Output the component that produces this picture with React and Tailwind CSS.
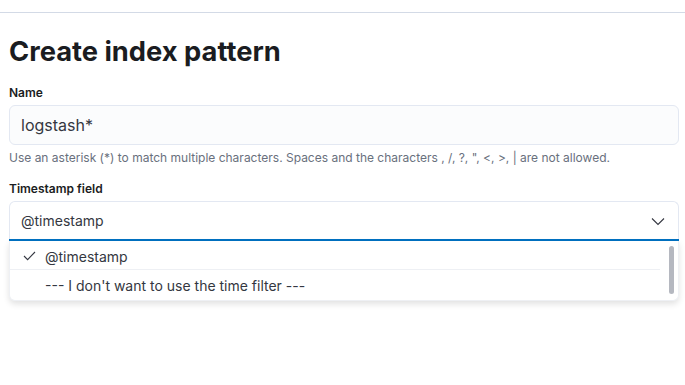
import React from 'react';

const App = () => {
  return (
    <div
      className="w-[685px] h-[385px] bg-white overflow-hidden text-[#343741]"
      style={{ fontFamily: 'Inter, "Liberation Sans", sans-serif' }}
    >
      {/* top rule */}
      <div className="h-[13px] border-b border-[#d3dae6]" />

      <div className="px-[9px]">
        <h1 className="mt-[21px] text-[27.3px] leading-[36px] font-bold text-[#1a1c21]">
          Create index pattern
        </h1>

        {/* Name field */}
        <label className="block mt-[15px] text-[12px] leading-[16px] font-semibold text-[#1a1c21]">
          Name
        </label>
        <div className="mt-[4px] h-[40px] w-[670px] rounded-[6px] border border-[#e3e8f2] bg-[#fbfcfd] flex items-center px-[11px]">
          <span className="text-[16px] text-[#343741]">logstash*</span>
        </div>
        <p className="mt-[5px] text-[12px] leading-[16px] text-[#69707d]">
          Use an asterisk (*) to match multiple characters. Spaces and the characters , /, ?, ", &lt;, &gt;, | are not allowed.
        </p>

        {/* Timestamp field */}
        <label className="block mt-[15px] text-[12px] leading-[16px] font-semibold text-[#1a1c21]">
          Timestamp field
        </label>
        <div className="mt-[4px] w-[670px] relative">
          <div className="h-[38px] rounded-t-[6px] border border-b-0 border-[#e3e8f2] bg-white flex items-center justify-between pl-[11px] pr-[12px]">
            <span className="text-[14px] text-[#343741]">@timestamp</span>
            <svg width="16" height="16" viewBox="0 0 16 16" fill="none">
              <path d="M2 5.5l6 6 6-6" stroke="#343741" strokeWidth="1.1" />
            </svg>
          </div>
          <div className="h-[2px] bg-[#0071c2]" />

          {/* dropdown list */}
          <div className="absolute left-0 right-0 top-[40px] h-[60px] bg-white rounded-b-[6px] shadow-[0_3px_6px_rgba(0,0,0,0.12)] border border-t-0 border-[#eef0f4] flex">
            <div className="flex-1 flex flex-col pr-[4px]">
              <div className="h-[29px] pt-[2px] flex items-center border-b border-[#eef0f4]">
                <span className="w-[35px] flex justify-center pl-[3px]">
                  <svg width="13" height="10" viewBox="0 0 13 10" fill="none">
                    <path d="M1 5l3.6 3.6L12 1" stroke="#343741" strokeWidth="1.1" />
                  </svg>
                </span>
                <span className="text-[14px] text-[#343741]">@timestamp</span>
              </div>
              <div className="h-[30px] pt-[1px] flex items-center pl-[35px]">
                <span className="text-[14px] text-[#343741]">--- I don't want to use the time filter ---</span>
              </div>
            </div>
            <div className="w-[14px] flex justify-center pt-[5px]">
              <div className="w-[5px] h-[48px] rounded-full bg-[#b5b8c0]" />
            </div>
          </div>
        </div>
      </div>
    </div>
  );
};

export default App;
